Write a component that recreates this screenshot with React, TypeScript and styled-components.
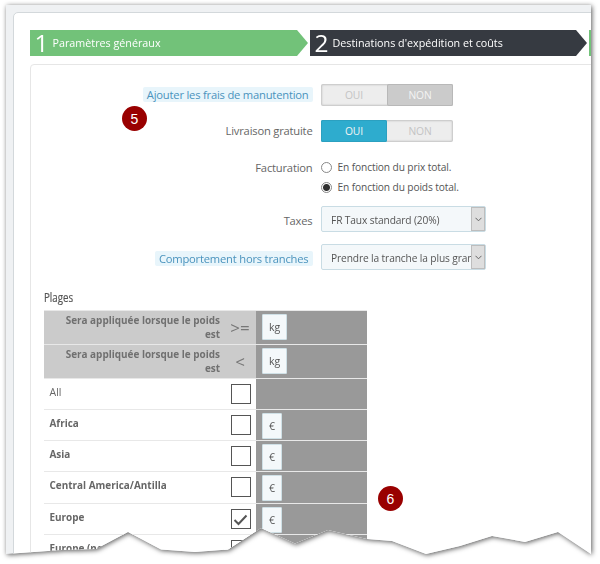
import React from "react";
import styled, { createGlobalStyle, css } from "styled-components";

const Global = createGlobalStyle`
  * { box-sizing: border-box; }
  body { margin: 0; background: #fff; overflow: hidden; font-family: "Open Sans", sans-serif; color: #666; }
`;

const Stage = styled.div`
  position: relative;
  width: 600px;
  height: 564px;
  padding: 5px 0 0 6px;
  overflow: hidden;
  background: #fff;
`;
const Shadow = styled.div`
  filter: drop-shadow(1px 1px 2.5px rgba(0, 0, 0, 0.65));
`;
const Sheet = styled.div`
  width: 585px;
  height: 549px;
  padding: 7px 0 0 7px;
  background: #eff1f3;
  clip-path: polygon(0 0, 585px 0, 585px 549px, 552px 527px, 519px 537px, 486px 531px, 454px 541px, 420px 549px,
    386px 536px, 361px 534px, 322px 525px, 289px 538.5px, 255px 523px, 222px 544.5px, 189px 547px, 155px 544.5px,
    122px 527px, 90px 544px, 56px 545px, 0 549px);
`;
const Panel = styled.div`
  width: 620px;
  height: 560px;
  padding: 17px 0 0 16px;
  background: #fff;
  border: 1px solid #d3d8db;
  border-radius: 5px;
`;
const Steps = styled.div`
  display: flex;
  gap: 2px;
  height: 26px;
`;
const Step = styled.div<{ $w: number; $bg: string }>`
  display: flex;
  flex: none;
  align-items: center;
  width: ${(p) => p.$w}px;
  padding-left: 4.5px;
  background: ${(p) => p.$bg};
  color: #fff;
  clip-path: polygon(0 0, calc(100% - 11px) 0, 100% 50%, calc(100% - 11px) 100%, 0 100%);
`;
const StepNumber = styled.span`
  width: 18px;
  font-size: 24.5px;
  line-height: 26px;
  letter-spacing: -0.5px;
`;
const StepName = styled.span`
  font-size: 10.75px;
  line-height: 26px;
`;
const Content = styled.div`
  width: 600px;
  height: 520px;
  margin-top: 8px;
  padding: 19px 0 0 13px;
  border: 1px solid #e6e6e6;
  border-radius: 4px;
`;
const Field = styled.div<{ $h: number }>`
  display: flex;
  gap: 8.5px;
  height: ${(p) => p.$h}px;
`;
const LabelCell = styled.div<{ $h?: number }>`
  display: flex;
  align-items: center;
  justify-content: flex-end;
  width: 268.5px;
  height: ${(p) => p.$h ?? 21}px;
`;
const Label = styled.span<{ $hint?: boolean }>`
  font-size: 11.2px;
  line-height: 15px;
  letter-spacing: -0.2px;
  white-space: nowrap;
  ${(p) =>
    p.$hint &&
    css`
      padding: 0 4px;
      color: #4a93bd;
      background: #e8f5fb;
      border-radius: 2px;
    `}
`;
const Switch = styled.div`
  display: flex;
  width: 132px;
  height: 22px;
  background: #ededed;
  border-radius: 2px;
  box-shadow: inset 0 0 2px 1px rgba(0, 0, 0, 0.18);
`;
const Choice = styled.span<{ $tone?: "blue" | "grey" }>`
  flex: 1;
  font-size: 10.3px;
  line-height: 23px;
  letter-spacing: -0.1px;
  text-align: center;
  border-radius: 2px;
  color: ${(p) => (p.$tone ? "#f4f4f4" : "#c4c4c4")};
  ${(p) => p.$tone === "blue" && "background: #2eacce; box-shadow: inset 0 0 0 1px #2ba0c0;"}
  ${(p) => p.$tone === "grey" && "background: #cbcbcb; box-shadow: inset 0 0 0 1px #b8b8b8;"}
`;
const Options = styled.div`
  display: flex;
  flex-direction: column;
  margin-top: -1px;
`;
const Option = styled.div`
  display: flex;
  align-items: center;
  gap: 5.5px;
  height: 20px;
  font-size: 10.2px;
  letter-spacing: -0.12px;
  color: #555;
`;
const Radio = styled.span<{ $on?: boolean }>`
  width: 11px;
  height: 11px;
  border: 1px solid #888;
  border-radius: 50%;
  background: ${(p) => (p.$on ? "radial-gradient(circle, #303030 0 3px, #fff 4px)" : "#fff")};
`;
const Select = styled.div`
  display: flex;
  width: 165px;
  height: 26px;
  margin-top: -1px;
  background: #f4f8fa;
  border: 1px solid #c9dce4;
  border-radius: 2px;
`;
const Value = styled.span`
  flex: 1;
  min-width: 0;
  padding-left: 9px;
  font-size: 10.2px;
  line-height: 26px;
  letter-spacing: -0.12px;
  white-space: nowrap;
  overflow: hidden;
  color: #555;
`;
const Arrow = styled.span`
  display: flex;
  align-items: center;
  justify-content: center;
  width: 14px;
  background: #dedede;
  border: 1px solid #bdbdbd;
`;
const Heading = styled.div`
  height: 20px;
  font-size: 12.5px;
  line-height: 15px;
  color: #555;
  -webkit-text-stroke: 0.2px #555;
  transform: scaleX(0.78);
  transform-origin: left;
`;
const Table = styled.div`
  width: 323px;
`;
const Row = styled.div<{ $h: number }>`
  display: flex;
  height: ${(p) => p.$h}px;
  border-top: 1px solid #e8e8e8;
`;
const Name = styled.div<{ $head?: boolean; $plain?: boolean }>`
  width: 180px;
  padding: 6px 0 0 5.5px;
  font-size: ${(p) => (p.$plain ? 10.5 : 9.95)}px;
  line-height: 15px;
  font-weight: ${(p) => (p.$plain ? 400 : 700)};
  color: #666;
  ${(p) =>
    p.$head &&
    css`
      padding: 2px 4px 0 20px;
      background: #cbcbcb;
      text-align: right;
      line-height: 14px;
      color: #707070;
    `}
`;
const Mark = styled.div<{ $head?: boolean }>`
  display: flex;
  align-items: center;
  justify-content: center;
  width: 32px;
  padding: ${(p) => (p.$head ? "0" : "0 0 1px 2px")};
  font-size: 17px;
  color: #777;
  background: ${(p) => (p.$head ? "#cbcbcb" : "#fff")};
`;
const Check = styled.span`
  display: block;
  width: 20px;
  height: 20px;
  border: 1.5px solid #555;
  background: #fff;
`;
const Price = styled.div`
  width: 111px;
  padding: 3px 0 0 6px;
  background: #999;
`;
const Unit = styled.span<{ $w: number }>`
  display: block;
  width: ${(p) => p.$w}px;
  height: 26px;
  border: 1px solid #cfe0e6;
  border-radius: 1px;
  background: #f4f8fa;
  font-size: 10.5px;
  line-height: 25px;
  text-align: center;
  color: #555;
`;
const Badge = styled.span<{ $x: number; $y: number }>`
  position: absolute;
  left: ${(p) => p.$x}px;
  top: ${(p) => p.$y}px;
  width: 25px;
  height: 25px;
  border-radius: 50%;
  background: #990000;
  color: #fff;
  font: 14px/26px "Liberation Sans", sans-serif;
  text-align: center;
`;

const Chevron = () => (
  <Arrow>
    <svg width="7" height="5" viewBox="0 0 7 5" fill="none" stroke="#666">
      <path d="M.5 .8l3 3 3-3" />
    </svg>
  </Arrow>
);

const zones = [
  { name: "All", h: 31, plain: true },
  { name: "Africa", h: 31 },
  { name: "Asia", h: 31 },
  { name: "Central America/Antilla", h: 32 },
  { name: "Europe", h: 31, checked: true },
  { name: "Europe (non-EU)", h: 31 },
];

export default function App() {
  return (
    <Stage>
      <Global />
      <Shadow>
        <Sheet>
          <Panel>
            <Steps>
              <Step $w={278} $bg="#72c279">
                <StepNumber>1</StepNumber>
                <StepName>Paramètres généraux</StepName>
              </Step>
              <Step $w={277} $bg="#363a41">
                <StepNumber>2</StepNumber>
                <StepName>Destinations d'expédition et coûts</StepName>
              </Step>
              <Step $w={40} $bg="#72c279" />
            </Steps>
            <Content>
              <Field $h={36}>
                <LabelCell><Label $hint>Ajouter les frais de manutention</Label></LabelCell>
                <Switch><Choice>OUI</Choice><Choice $tone="grey">NON</Choice></Switch>
              </Field>
              <Field $h={38}>
                <LabelCell><Label>Livraison gratuite</Label></LabelCell>
                <Switch><Choice $tone="blue">OUI</Choice><Choice>NON</Choice></Switch>
              </Field>
              <Field $h={49}>
                <LabelCell $h={19}><Label>Facturation</Label></LabelCell>
                <Options>
                  <Option><Radio />En fonction du prix total.</Option>
                  <Option><Radio $on />En fonction du poids total.</Option>
                </Options>
              </Field>
              <Field $h={38}>
                <LabelCell $h={26}><Label>Taxes</Label></LabelCell>
                <Select><Value>FR Taux standard (20%)</Value><Chevron /></Select>
              </Field>
              <Field $h={45}>
                <LabelCell $h={27}><Label $hint>Comportement hors tranches</Label></LabelCell>
                <Select><Value>Prendre la tranche la plus grande</Value><Chevron /></Select>
              </Field>
              <Heading>Plages</Heading>
              <Table>
                {[">=", "<"].map((op) => (
                  <Row key={op} $h={34}>
                    <Name $head>Sera appliquée lorsque le poids est</Name>
                    <Mark $head>{op}</Mark>
                    <Price><Unit $w={25}>kg</Unit></Price>
                  </Row>
                ))}
                {zones.map((z) => (
                  <Row key={z.name} $h={z.h}>
                    <Name $plain={z.plain}>{z.name}</Name>
                    <Mark>
                      <Check>
                        {z.checked && (
                          <svg width="17" height="17" viewBox="0 0 17 17" fill="none" stroke="#555" strokeWidth="2">
                            <path d="M2.5 9l4 4 8-8.500" />
                          </svg>
                        )}
                      </Check>
                    </Mark>
                    <Price>{!z.plain && <Unit $w={20}>€</Unit>}</Price>
                  </Row>
                ))}
              </Table>
            </Content>
          </Panel>
        </Sheet>
      </Shadow>
      <Badge $x={122} $y={106}>5</Badge>
      <Badge $x={378} $y={485.5}>6</Badge>
    </Stage>
  );
}
